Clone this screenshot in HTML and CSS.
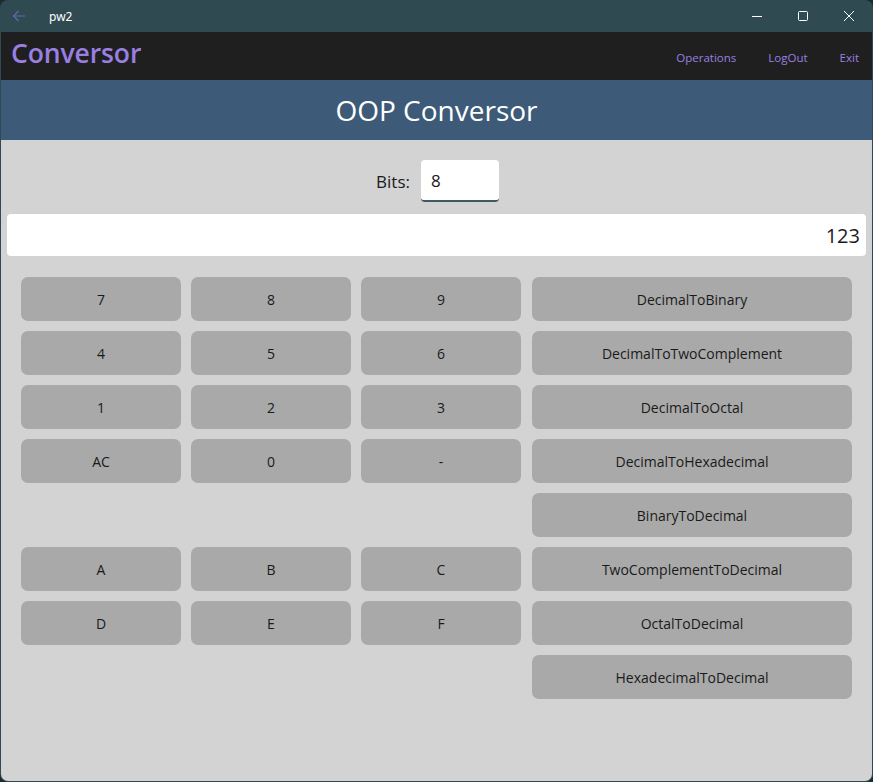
FILE: index.html
```html
<!DOCTYPE html>
<html>
<head>
<meta charset="utf-8">
<link rel="stylesheet" href="styles.css">
</head>
<body>
<div class="window">
  <div class="titlebar">
    <svg class="back" width="16" height="16" viewBox="0 0 16 16"><path d="M14 8H2.5M7.5 3L2.5 8l5 5" fill="none" stroke="#6a62b0" stroke-width="1.2"/></svg>
    <span class="appname">pw2</span>
    <div class="controls">
      <svg width="46" height="32" viewBox="0 0 46 32"><path d="M18 16.5h10" stroke="#fff" stroke-width="1"/></svg>
      <svg width="46" height="32" viewBox="0 0 46 32"><rect x="18.5" y="11.5" width="9" height="9" rx="1" fill="none" stroke="#fff" stroke-width="1"/></svg>
      <svg width="46" height="32" viewBox="0 0 46 32"><path d="M18 11l10 10M28 11L18 21" stroke="#fff" stroke-width="1"/></svg>
    </div>
  </div>
  <div class="nav">
    <span class="brand">Conversor</span>
    <div class="links">
      <a class="link">Operations</a>
      <a class="link">LogOut</a>
      <a class="link">Exit</a>
    </div>
  </div>
  <div class="header">OOP Conversor</div>
  <div class="content">
    <div class="bits">
      <span class="bits-label">Bits:</span>
      <div class="bits-input">8</div>
    </div>
    <div class="display">123</div>
    <div class="pad">
      <div class="btn">7</div><div class="btn">8</div><div class="btn">9</div><div class="btn">DecimalToBinary</div>
      <div class="btn">4</div><div class="btn">5</div><div class="btn">6</div><div class="btn">DecimalToTwoComplement</div>
      <div class="btn">1</div><div class="btn">2</div><div class="btn">3</div><div class="btn">DecimalToOctal</div>
      <div class="btn">AC</div><div class="btn">0</div><div class="btn">-</div><div class="btn">DecimalToHexadecimal</div>
      <div class="blank"></div><div class="blank"></div><div class="blank"></div><div class="btn">BinaryToDecimal</div>
      <div class="btn">A</div><div class="btn">B</div><div class="btn">C</div><div class="btn">TwoComplementToDecimal</div>
      <div class="btn">D</div><div class="btn">E</div><div class="btn">F</div><div class="btn">OctalToDecimal</div>
      <div class="blank"></div><div class="blank"></div><div class="blank"></div><div class="btn">HexadecimalToDecimal</div>
    </div>
  </div>
</div>
</body>
</html>
```
FILE: styles.css
```css
html, body {
  margin: 0;
  padding: 0;
  background: #1c2a2e;
}
body {
  font-family: "Open Sans", "Noto Sans", sans-serif;
}
.window {
  width: 873px;
  height: 782px;
  box-sizing: border-box;
  background: #2f4a51;
  border-radius: 8px;
  padding: 0 1px 1px 1px;
  display: flex;
  flex-direction: column;
  overflow: hidden;
}
.titlebar {
  height: 32px;
  display: flex;
  align-items: center;
  color: #fff;
  flex-shrink: 0;
}
.back {
  margin-left: 10px;
}
.appname {
  margin-left: 22px;
  font-family: "Noto Sans", "Open Sans", sans-serif;
  font-size: 12px;
}
.controls {
  margin-left: auto;
  display: flex;
}
.nav {
  height: 48px;
  background: #1f1f1f;
  display: flex;
  align-items: center;
  flex-shrink: 0;
}
.brand {
  margin-left: 10px;
  color: #9a7fe2;
  font-size: 26.5px;
  font-weight: 600;
  letter-spacing: -0.1px;
  position: relative;
  top: -3px;
}
.links {
  margin-left: auto;
  display: flex;
  gap: 32px;
  margin-right: 13px;
  position: relative;
  top: 1px;
}
.link {
  color: #9a7fe2;
  font-size: 11.5px;
}
.header {
  height: 60px;
  background: #3d5b78;
  color: #fff;
  font-size: 28px;
  display: flex;
  align-items: center;
  justify-content: center;
  flex-shrink: 0;
}
.content {
  flex: 1;
  background: #d3d3d3;
  border-radius: 0 0 7px 7px;
  padding-top: 20px;
}
.bits {
  display: flex;
  justify-content: center;
  align-items: center;
  gap: 11px;
  padding-left: 2px;
}
.bits-label {
  font-size: 17px;
  color: #1a1a1a;
}
.bits-input {
  width: 78px;
  height: 42px;
  box-sizing: border-box;
  background: #fff;
  border-radius: 4px;
  border-bottom: 2px solid #3f5a66;
  font-size: 17px;
  color: #1a1a1a;
  padding-left: 10px;
  display: flex;
  align-items: center;
}
.display {
  margin: 12px 6px 0 6px;
  height: 42px;
  background: #fff;
  border-radius: 4px;
  font-size: 20px;
  color: #1a1a1a;
  display: flex;
  align-items: center;
  justify-content: flex-end;
  padding-right: 6px;
}
.pad {
  margin: 21px 0 0 20px;
  display: grid;
  grid-template-columns: 160px 160px 160px 321px;
  grid-auto-rows: 44px;
  column-gap: 10px;
  row-gap: 10px;
}
.btn {
  background: #a9a9a9;
  border-radius: 7px;
  font-size: 14px;
  color: #1a1a1a;
  display: flex;
  align-items: center;
  justify-content: center;
}
.pad .btn:nth-child(4n) {
  margin-left: 1px;
}
```
